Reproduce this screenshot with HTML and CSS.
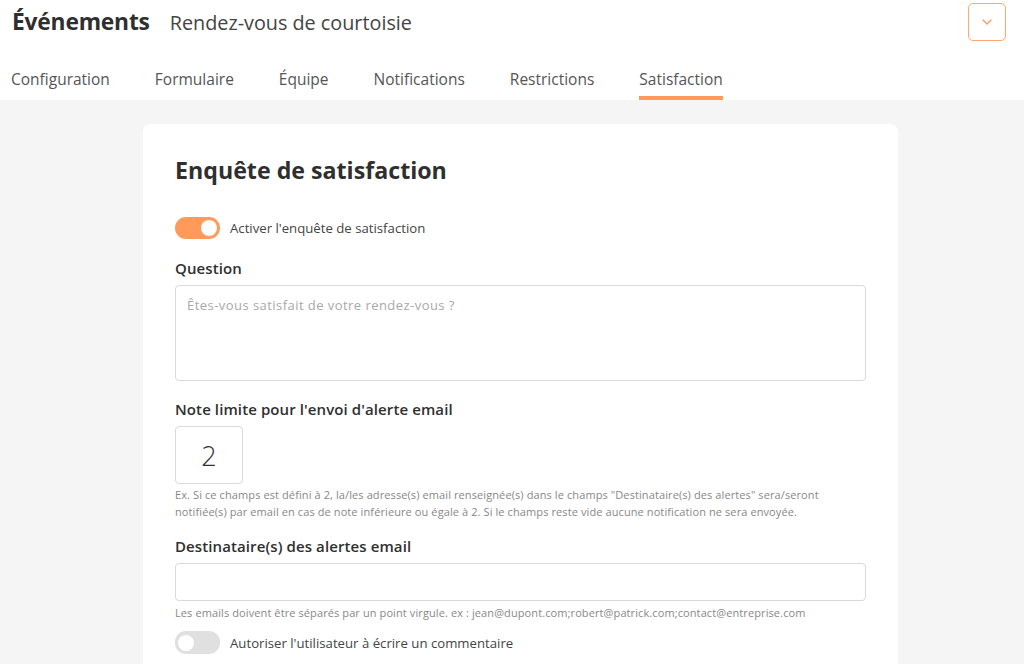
FILE: index.html
```html
<!DOCTYPE html>
<html lang="fr">
<head>
<meta charset="utf-8">
<link rel="stylesheet" href="styles.css">
</head>
<body>
<header class="top">
  <div class="titlebar">
    <h1 class="title">Événements</h1>
    <span class="subtitle">Rendez-vous de courtoisie</span>
    <button class="menu-btn" aria-label="menu">
      <svg width="12" height="8" viewBox="0 0 12 8"><path d="M2 2 L6 6 L10 2" fill="none" stroke="#ff9a5a" stroke-width="1.4" stroke-linecap="round" stroke-linejoin="round"/></svg>
    </button>
  </div>
  <nav class="tabs">
    <a class="tab">Configuration</a>
    <a class="tab">Formulaire</a>
    <a class="tab">Équipe</a>
    <a class="tab">Notifications</a>
    <a class="tab">Restrictions</a>
    <a class="tab active">Satisfaction</a>
  </nav>
</header>
<main class="content">
  <section class="card">
    <h2 class="card-title">Enquête de satisfaction</h2>
    <label class="switch-row">
      <span class="switch on"><span class="knob"></span></span>
      <span class="switch-label">Activer l'enquête de satisfaction</span>
    </label>
    <div class="field f-question">
      <div class="label">Question</div>
      <div class="textarea"><span class="placeholder">Êtes-vous satisfait de votre rendez-vous ?</span></div>
    </div>
    <div class="field f-note">
      <div class="label">Note limite pour l'envoi d'alerte email</div>
      <div class="numbox">2</div>
      <p class="help help-note">Ex. Si ce champs est défini à 2, la/les adresse(s) email renseignée(s) dans le champs "Destinataire(s) des alertes" sera/seront<br>notifiée(s) par email en cas de note inférieure ou égale à 2. Si le champs reste vide aucune notification ne sera envoyée.</p>
    </div>
    <div class="field f-dest">
      <div class="label">Destinataire(s) des alertes email</div>
      <div class="input"></div>
      <p class="help help-dest">Les emails doivent être séparés par un point virgule. ex : jean@dupont.com;robert@patrick.com;contact@entreprise.com</p>
    </div>
    <label class="switch-row off-row">
      <span class="switch"><span class="knob"></span></span>
      <span class="switch-label">Autoriser l'utilisateur à écrire un commentaire</span>
    </label>
  </section>
</main>
</body>
</html>
```
FILE: styles.css
```css
* { box-sizing: border-box; }
html, body { margin: 0; padding: 0; }
body {
  font-family: "Open Sans", "Noto Sans", sans-serif;
  color: #333;
  background: #f5f5f5;
  height: 664px;
  overflow: hidden;
}
.top {
  background: #fff;
  padding: 0 0 0 12px;
}
.titlebar {
  display: flex;
  align-items: center;
  height: 44px;
  padding-right: 18px;
}
.title {
  margin: 0;
  font-size: 22.8px;
  line-height: 30px;
  font-weight: 700;
  color: #2f2f2f;
  letter-spacing: -0.2px;
}
.subtitle {
  margin-left: 20px;
  font-size: 19.8px;
  color: #444;
  font-weight: 400;
}
.menu-btn {
  margin-left: auto;
  width: 38px;
  height: 38px;
  border: 1.5px solid #ffa96f;
  border-radius: 5px;
  background: #fff;
  display: flex;
  align-items: center;
  justify-content: center;
  padding: 0;
}
.tabs {
  display: flex;
  height: 56px;
  margin-left: -1px;
}
.tab {
  display: block;
  font-size: 15.5px;
  line-height: 20px;
  padding-top: 25px;
  height: 56px;
  color: #555;
  margin-right: 45px;
  border-bottom: 4px solid transparent;
}
.tab.active {
  border-bottom-color: #ff9a5a;
}
.content {
  padding: 24px 0 0 143px;
}
.card {
  width: 755px;
  background: #fff;
  border-radius: 8px;
  padding: 31px 32px 20px 32px;
  height: 600px;
}
.card-title {
  margin: 0 0 31px 0;
  font-size: 23.2px;
  line-height: 31px;
  font-weight: 700;
  color: #2f2f2f;
}
.switch-row {
  display: flex;
  align-items: center;
  gap: 10px;
}
.switch {
  width: 45px;
  height: 22px;
  border-radius: 11px;
  background: #e0e0e0;
  display: flex;
  align-items: center;
  padding: 0 3px;
}
.switch.on {
  background: #ff9a5a;
  justify-content: flex-end;
}
.knob {
  width: 16px;
  height: 16px;
  border-radius: 50%;
  background: #fff;
}
.switch-label {
  font-size: 13.2px;
  color: #444;
}
.label {
  font-size: 15px;
  line-height: 20px;
  font-weight: 600;
  color: #2f2f2f;
  margin-bottom: 7px;
  letter-spacing: 0.1px;
}
.f-question { margin-top: 19px; }
.f-note { margin-top: 18px; }
.f-dest { margin-top: 16px; }
.textarea {
  width: 691px;
  height: 96px;
  border: 1px solid #d9d9d9;
  border-radius: 4px;
  padding: 9px 11px;
  line-height: 18px;
}
.placeholder {
  font-size: 13px;
  letter-spacing: 0.45px;
  color: #a8a8a8;
}
.numbox {
  width: 68px;
  height: 58px;
  border: 1px solid #d9d9d9;
  border-radius: 4px;
  display: flex;
  align-items: center;
  justify-content: center;
  font-size: 27px;
  font-weight: 300;
  color: #333;
}
.help {
  font-size: 11px;
  line-height: 17px;
  color: #888;
  letter-spacing: 0.1px;
  white-space: nowrap;
}
.help-note { margin: 2px 0 0 0; }
.help-dest { margin: 3px 0 0 0; }
.input {
  width: 691px;
  height: 38px;
  border: 1px solid #d9d9d9;
  border-radius: 4px;
}
.off-row {
  margin-top: 10px;
}
.off-row .switch { height: 23px; }
```
